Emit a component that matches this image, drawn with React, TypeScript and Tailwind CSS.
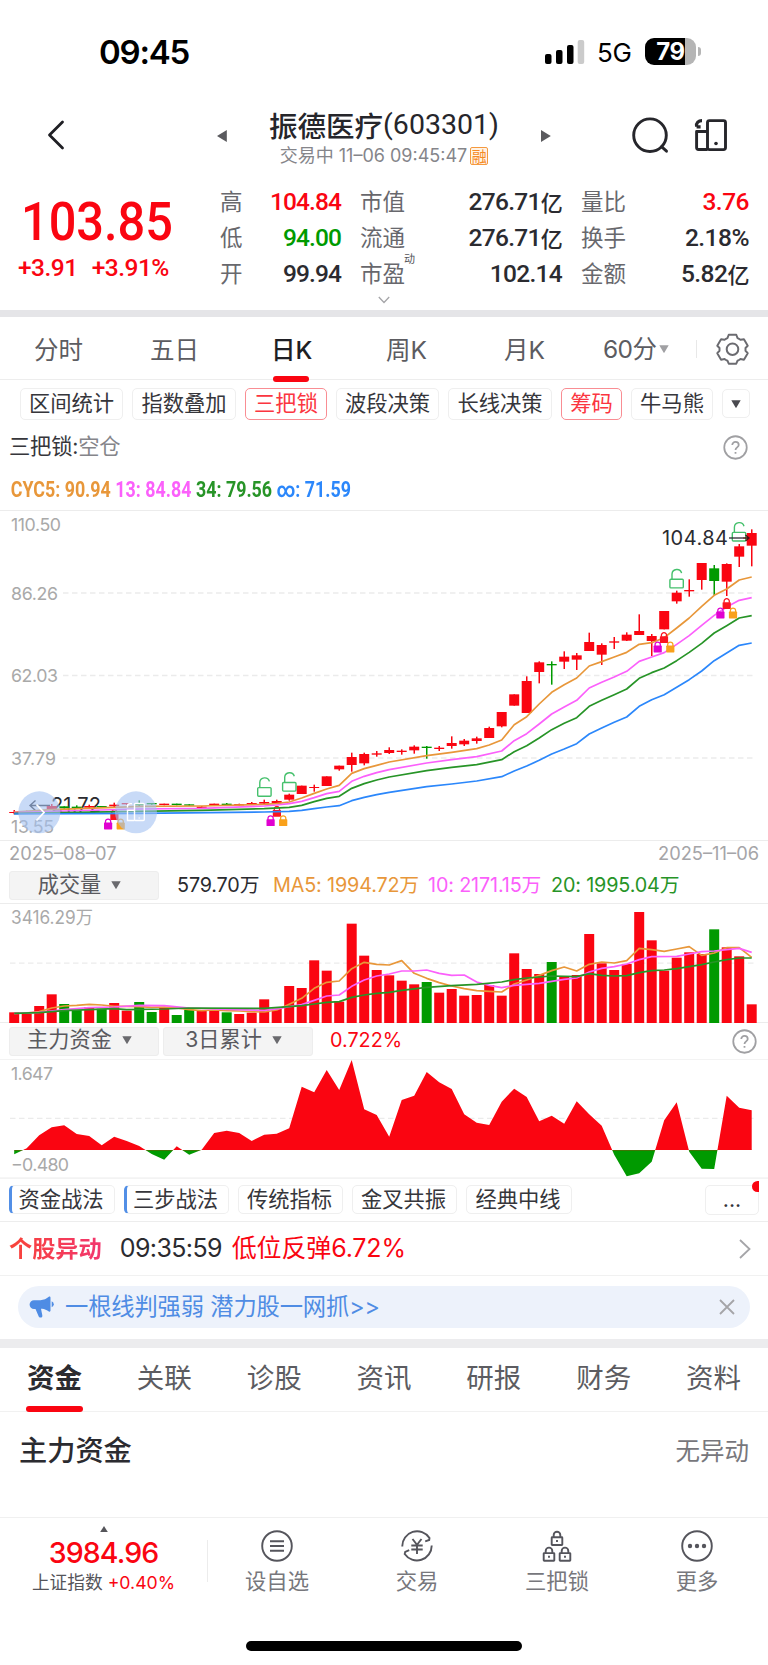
import React from "react";

const RED = "#fa0511";
const GREEN = "#009a00";
const cx = (i: number) => 14.2 + i * 12.5;

type Candle = [boolean, number, number, number, number];

/* [rising, body top, body bottom, wick top, wick bottom] in thirds of a pixel below y=500 */
const candles: Candle[] = [
  [true, 936, 939, 930, 943], [true, 934, 937, 932, 939], [true, 930, 935, 930, 936], [true, 918, 928, 912, 930],
  [false, 919, 925, 919, 926], [false, 920, 925, 916, 926], [true, 918, 923, 914, 924], [false, 918, 922, 918, 924],
  [true, 914, 919, 908, 922], [true, 909, 913, 909, 914], [false, 912, 916, 901, 918], [false, 909, 913, 909, 914],
  [true, 911, 915, 911, 916], [false, 911, 915, 911, 916], [false, 913, 917, 913, 918], [true, 920, 926, 918, 927],
  [true, 911, 915, 911, 916], [false, 911, 915, 909, 916], [true, 912, 916, 911, 917], [true, 909, 914, 906, 915],
  [true, 906, 911, 899, 915], [true, 903, 909, 899, 911], [true, 884, 899, 881, 902], [true, 857, 882, 857, 882],
  [true, 861, 864, 854, 875], [true, 829, 858, 829, 858], [true, 797, 808, 797, 812], [true, 771, 795, 758, 815],
  [true, 762, 790, 758, 796], [true, 760, 764, 753, 770], [true, 750, 759, 742, 762], [true, 752, 756, 748, 764],
  [true, 740, 751, 736, 761], [false, 740, 744, 738, 776], [true, 743, 747, 738, 753], [true, 729, 738, 709, 746],
  [true, 722, 733, 717, 738], [true, 715, 723, 710, 731], [true, 684, 714, 680, 714], [true, 636, 679, 636, 682],
  [true, 583, 617, 583, 617], [true, 543, 639, 529, 639], [true, 487, 516, 484, 550], [false, 492, 496, 484, 554],
  [true, 470, 485, 454, 507], [true, 466, 479, 459, 510], [true, 426, 453, 398, 453], [true, 435, 464, 430, 495],
  [true, 424, 428, 411, 447], [true, 404, 422, 397, 423], [true, 393, 405, 343, 405], [true, 408, 423, 402, 468],
  [true, 333, 388, 333, 388], [true, 278, 304, 272, 311], [true, 270, 274, 238, 290], [true, 189, 240, 189, 269],
  [false, 205, 243, 195, 285], [true, 192, 245, 190, 288], [true, 139, 170, 132, 201], [true, 99, 137, 88, 199],
];

type Pts = [number, number][];
const priceLines: { color: string; pts: Pts }[] = [
  { color: "#e8973a", pts: [[0, 936], [3, 929], [8, 922], [10, 919], [15, 918], [20, 913], [21, 911], [22, 906], [23, 894], [24, 880], [25, 867], [26, 856], [27, 820], [28, 806], [29, 796], [30, 786], [33, 767], [35, 757], [37, 746], [38, 735], [39, 720], [40, 674], [41, 650], [42, 612], [43, 577], [44, 554], [45, 534], [46, 498], [47, 485], [48, 471], [49, 457], [50, 433], [51, 428], [52, 413], [53, 384], [54, 354], [55, 319], [56, 286], [57, 267], [58, 240], [59, 231]] },
  { color: "#fb60fb", pts: [[0, 938], [4, 933], [10, 927], [15, 925], [20, 918], [21, 915], [22, 911], [23, 904], [24, 893], [25, 881], [26, 874], [27, 844], [28, 829], [29, 818], [30, 809], [33, 789], [35, 779], [37, 770], [39, 753], [40, 722], [41, 701], [42, 672], [43, 642], [44, 621], [45, 601], [46, 564], [47, 547], [48, 531], [49, 514], [50, 484], [51, 471], [52, 458], [53, 433], [54, 407], [55, 376], [56, 346], [57, 321], [58, 301], [59, 293]] },
  { color: "#279427", pts: [[0, 940], [10, 934], [15, 931], [20, 926], [22, 922], [23, 916], [24, 905], [25, 895], [26, 889], [27, 865], [28, 851], [29, 840], [30, 831], [33, 812], [35, 802], [37, 794], [39, 779], [40, 755], [41, 737], [42, 714], [43, 689], [44, 670], [45, 653], [46, 619], [47, 601], [48, 584], [49, 567], [50, 535], [51, 518], [52, 504], [53, 482], [54, 457], [55, 430], [56, 399], [57, 377], [58, 354], [59, 347]] },
  { color: "#2b87fb", pts: [[0, 942], [10, 940], [20, 936], [22, 934], [23, 931], [24, 926], [25, 921], [26, 917], [27, 902], [28, 892], [29, 884], [30, 877], [33, 860], [35, 852], [37, 843], [39, 830], [40, 813], [41, 798], [42, 781], [43, 762], [44, 747], [45, 731], [46, 702], [47, 684], [48, 667], [49, 651], [50, 619], [51, 599], [52, 584], [53, 562], [54, 539], [55, 513], [56, 482], [57, 459], [58, 436], [59, 429]] },
];

const volumes = [457, 461, 438, 403, 432, 450, 441, 446, 429, 452, 426, 456, 442, 465, 449, 452, 452, 457, 462, 458, 418, 446, 378, 384, 301, 332, 425, 191, 287, 330, 346, 362, 373, 366, 398, 387, 407, 405, 375, 407, 280, 327, 342, 306, 350, 345, 222, 310, 330, 312, 156, 241, 332, 293, 277, 282, 208, 262, 289, 433];
const volumeDown = [4, 5, 7, 10, 11, 13, 14, 17, 33, 43, 56];

const volumeLines: { color: string; pts: Pts }[] = [
  { color: "#e8973a", pts: [[0, 460], [1, 459], [2, 455], [3, 444], [4, 438], [5, 436], [6, 433], [7, 435], [8, 439], [9, 439], [10, 440], [11, 442], [12, 441], [13, 444], [14, 449], [15, 452], [16, 450], [17, 452], [18, 453], [19, 455], [20, 456], [21, 450], [22, 433], [23, 415], [24, 385], [25, 367], [26, 363], [27, 326], [28, 307], [29, 313], [30, 315], [31, 302], [32, 340], [33, 355], [34, 368], [35, 378], [36, 386], [37, 392], [38, 394], [39, 396], [40, 372], [41, 360], [42, 346], [43, 332], [44, 321], [45, 333], [46, 313], [47, 306], [48, 309], [49, 302], [50, 265], [51, 269], [52, 274], [53, 267], [54, 260], [55, 286], [56, 279], [57, 263], [58, 263], [59, 292]] },
  { color: "#fb60fb", pts: [[0, 460], [2, 457], [4, 449], [6, 443], [8, 441], [10, 436], [12, 437], [14, 444], [17, 448], [20, 451], [21, 447], [22, 440], [23, 434], [24, 421], [25, 408], [26, 405], [27, 379], [28, 360], [29, 348], [30, 342], [31, 333], [32, 333], [33, 330], [34, 340], [35, 346], [36, 345], [37, 366], [38, 376], [39, 383], [40, 376], [42, 370], [43, 364], [44, 358], [45, 354], [46, 336], [47, 325], [48, 320], [49, 312], [50, 299], [51, 290], [53, 289], [54, 282], [55, 275], [56, 273], [57, 269], [58, 265], [59, 277]] },
  { color: "#279427", pts: [[0, 460], [2, 458], [4, 452], [6, 449], [8, 446], [9, 449], [12, 447], [14, 444], [20, 445], [22, 440], [23, 437], [24, 432], [25, 427], [26, 425], [27, 412], [28, 405], [29, 400], [30, 397], [31, 391], [33, 382], [35, 377], [37, 373], [39, 366], [40, 359], [41, 354], [42, 351], [43, 348], [45, 350], [46, 341], [47, 346], [48, 348], [49, 347], [50, 338], [51, 332], [52, 330], [53, 326], [54, 320], [55, 314], [56, 306], [57, 299], [58, 294], [59, 294]] },
];

const fund = [883, 865, 826, 802, 796, 822, 828, 856, 830, 843, 858, 882, 899, 859, 884, 869, 819, 812, 819, 843, 824, 821, 805, 680, 697, 630, 690, 600, 748, 765, 830, 720, 707, 636, 667, 687, 763, 788, 795, 725, 686, 711, 784, 767, 791, 724, 763, 797, 884, 949, 940, 905, 781, 727, 875, 926, 927, 707, 743, 751];

const toPoints = (pts: Pts, base: number) => pts.map(([i, y]) => `${cx(i)},${base + y / 3}`).join(" ");

function Lines({ data, base }: { data: { color: string; pts: Pts }[]; base: number }) {
  return (
    <>
      {data.map((l) => (
        <polyline key={l.color} points={toPoints(l.pts, base)} fill="none" stroke={l.color} strokeWidth="1.7" strokeLinejoin="round" />
      ))}
    </>
  );
}

function OpenLock({ x, y }: { x: number; y: number }) {
  return (
    <g transform={`translate(${x} ${y})`} fill="none" stroke="#45c06c" strokeWidth="1.4">
      <rect x="-6.7" y="10.8" width="13.4" height="8.6" rx="1" />
      <path d="M-4.6 10.8V5.6a4.900 4.900 0 0 1 9.600-1" />
    </g>
  );
}

function MiniLock({ x, y, color }: { x: number; y: number; color: string }) {
  return (
    <g transform={`translate(${x} ${y})`}>
      <rect x="-4.1" y="3.9" width="8.2" height="6.8" rx="0.6" fill={color} />
      <path d="M-2.6 4.5V2.8a2.6 2.4 0 0 1 5.2 0v1.7" fill="none" stroke={color} strokeWidth="1.3" />
    </g>
  );
}

function LockTriplet({ x, y }: { x: number; y: number }) {
  return (
    <g>
      <MiniLock x={x} y={y} color="#fb1420" />
      <MiniLock x={x - 6.3} y={y + 9.4} color="#e000d0" />
      <MiniLock x={x + 6.3} y={y + 9.4} color="#f9a11b" />
    </g>
  );
}

function Dash({ y, x = 10 }: { y: number; x?: number }) {
  return <line x1={x} x2="756" y1={y} y2={y} stroke="#ebebeb" strokeWidth="1.3" strokeDasharray="5.5 3.5" />;
}

function PriceChart() {
  return (
    <svg className="block h-[330px] w-full" viewBox="0 510 768 330" fontFamily="Inter, 'Noto Sans CJK SC', sans-serif">
      <line x1="0" x2="768" y1="510.5" y2="510.5" stroke="#ececec" />
      <g fill="#a9a9a9" fontSize="17.8">
        <text x="11" y="531.3" textLength="50">110.50</text>
        <text x="11" y="599.8" textLength="47">86.26</text>
        <text x="11" y="682.3" textLength="47">62.03</text>
        <text x="11" y="765" textLength="45">37.79</text>
        <text x="11" y="833" textLength="43">13.55</text>
      </g>
      <Dash y={593} x={63} />
      <Dash y={675.5} x={63} />
      <Dash y={758} x={63} />
      <text x="51" y="812" fontSize="20" fill="#2b2b30" textLength="50">21.72</text>
      <path d="M50 805.500H30m5.500-5L30 805.500l5.500 5" fill="none" stroke="#2b2b30" strokeWidth="1.4" />
      {candles.map(([up, t, b, wt, wb], i) => (
        <g key={i} fill={up ? RED : GREEN}>
          <rect x={cx(i) - 5} width="10" y={500 + t / 3} height={(b - t) / 3} />
          <rect x={cx(i) - 0.7} width="1.5" y={500 + wt / 3} height={(wb - wt) / 3} />
        </g>
      ))}
      <OpenLock x={264.4} y={776.8} />
      <OpenLock x={289.3} y={771.7} />
      <OpenLock x={676.6} y={568.5} />
      <OpenLock x={739} y={521.6} />
      <text x="662" y="544.8" fontSize="20" fill="#2b2b30" textLength="66">104.84</text>
      <path d="M729 538h14" stroke="#2b2b30" strokeWidth="1.3" />
      <path d="M743 538h6m-3.500-3 3.500 3-3.500 3" fill="none" stroke="#4a1515" strokeWidth="1.3" />
      <LockTriplet x={114.4} y={809.3} />
      <LockTriplet x={276.9} y={806} />
      <Lines data={priceLines} base={500} />
      <LockTriplet x={664} y={632.3} />
      <LockTriplet x={726.7} y={598.3} />
      <circle cx="39.3" cy="812.3" r="21" fill="#a3c1f2" fillOpacity="0.6" />
      <circle cx="136" cy="812.3" r="21" fill="#a3c1f2" fillOpacity="0.6" />
      <path d="m36.500 804.500 7.500 8-7.500 8" fill="none" stroke="#fff" strokeWidth="1.8" />
      <g fill="none" stroke="#fff" strokeWidth="1.4">
        <rect x="134.500" y="803.500" width="9.800" height="17" rx="1" />
        <path d="M134.500 810.300h-7v10.200h7M127.500 807.500v-1.200a2.500 2.500 0 0 1 2.500-2.500h2" />
        <path d="M139.200 817.600v.8" />
      </g>
    </svg>
  );
}

function VolumeChart() {
  return (
    <svg className="block h-[120px] w-full" viewBox="0 903 768 120" fontFamily="Inter, 'Noto Sans CJK SC', sans-serif">
      <line x1="0" x2="768" y1="903.500" y2="903.500" stroke="#ececec" />
      <line x1="0" x2="768" y1="1022.500" y2="1022.500" stroke="#ececec" />
      <Dash y={963.2} />
      <text x="11" y="924.300" fontSize="18" fill="#a9a9a9" textLength="82" lengthAdjust="spacingAndGlyphs">3416.29万</text>
      {volumes.map((v, i) => (
        <rect key={i} x={cx(i) - 5} width="10" y={860 + v / 3} height={163 - v / 3} fill={volumeDown.includes(i) ? GREEN : RED} />
      ))}
      <Lines data={volumeLines} base={860} />
    </svg>
  );
}

function FundChart() {
  const poly = `${cx(0)},1150 ${fund.map((v, i) => `${cx(i)},${860 + v / 3}`).join(" ")} ${cx(59)},1150`;
  return (
    <svg className="block h-[120px] w-full" viewBox="0 1059 768 120" fontFamily="Inter, sans-serif">
      <clipPath id="above"><rect x="0" y="1050" width="768" height="100.300" /></clipPath>
      <clipPath id="below"><rect x="0" y="1149.800" width="768" height="40" /></clipPath>
      <line x1="0" x2="768" y1="1059" y2="1059" stroke="#f3f3f3" strokeWidth="2" />
      <line x1="0" x2="768" y1="1178.300" y2="1178.300" stroke="#f3f3f3" strokeWidth="2" />
      <Dash y={1118.3} />
      <polygon points={poly} fill={GREEN} clipPath="url(#below)" />
      <polygon points={poly} fill={RED} clipPath="url(#above)" />
      <g fill="#a9a9a9" fontSize="17.800">
        <text x="11" y="1079.500" textLength="42">1.647</text>
        <text x="11" y="1171" textLength="58">−0.480</text>
      </g>
    </svg>
  );
}

function HelpIcon({ className }: { className: string }) {
  return (
    <svg className={className} viewBox="0 0 24 24" fill="none" stroke="#a0a0a3" strokeWidth="1.700">
      <circle cx="12" cy="12" r="10.800" />
      <path d="M8.900 9.700c0-1.900 1.300-3 3.100-3s3.100 1.100 3.100 2.800c0 2.200-3.100 2.500-3.100 4.800" />
      <path d="M12 16.300v1.700" />
    </svg>
  );
}

function Down({ className }: { className: string }) {
  return (
    <svg className={className} viewBox="0 0 10 8" fill="currentColor">
      <path d="M.3.300h9.400L5.600 7.300a.7.700 0 0 1-1.200 0z" />
    </svg>
  );
}

function StatusBar() {
  return (
    <div className="flex h-[100px] items-start pt-[32px]">
      <div className="ml-[99px] w-[446px] text-[33px] font-semibold leading-[40px] tracking-[-1.200px] text-black">09:45</div>
      <svg className="mt-[8px] h-6 w-[40px]" viewBox="0 0 40 24" fill="#000">
        <rect x="0" y="14" width="6.500" height="10" rx="2" />
        <rect x="11" y="10" width="6.500" height="14" rx="2" />
        <rect x="22" y="5" width="6.500" height="19" rx="2" />
        <rect x="32.700" y="0" width="6.500" height="24" rx="2" fill="#cbcbcb" />
      </svg>
      <div className="ml-[12px] mt-[1px] w-[48px] text-[26px] leading-[40px] tracking-[-0.300px] text-black">5G</div>
      <div className="mt-[6px] flex items-center">
        <div className="flex h-[27px] w-[51px] items-center justify-center rounded-[9px] bg-[linear-gradient(90deg,#000_79%,#b5b5b5_79%)] text-[24px] font-bold leading-none tracking-[-0.500px] text-white">79</div>
        <div className="ml-[2px] h-[9px] w-[3px] rounded-r-full bg-[#b5b5b5]" />
      </div>
    </div>
  );
}

function Header() {
  return (
    <div className="flex h-[80px] items-start">
      <svg className="ml-[47px] mt-[20px] h-[30px] w-[18px]" viewBox="0 0 18 30" fill="none" stroke="#1f1f24" strokeWidth="2.800" strokeLinecap="round" strokeLinejoin="round">
        <path d="M15.500 2 2.500 15l13 13" />
      </svg>
      <svg className="ml-[152px] mt-[30px] h-3 w-[10px]" viewBox="0 0 10 12" fill="#5a5a5e"><path d="M9.800 0v12L0 6z" /></svg>
      <div className="ml-[12px] flex w-[290px] flex-col items-center whitespace-nowrap">
        <div className="mt-[5px] flex h-[40px] items-center font-['Noto_Sans_CJK_SC'] text-[28.500px] font-medium leading-[40px] text-[#26262b]">
          <span>振德医疗</span>
          <span className="font-['Roboto',sans-serif] font-normal">(603301)</span>
        </div>
        <div className="-mt-[1px] flex h-[24px] items-center text-[18px] leading-[24px] text-[#85858a]">
          <span>交易中 11–06 09:45:47</span>
          <span className="ml-[3px] flex h-[18px] w-[18px] items-center justify-center rounded-[2px] border border-[#f59a3f] bg-[#fff3e6] text-[15px] leading-none text-[#f58a25]">融</span>
        </div>
      </div>
      <svg className="ml-[12px] mt-[30px] h-3 w-[10px]" viewBox="0 0 10 12" fill="#5a5a5e"><path d="M0 0v12l9.800-6z" /></svg>
      <svg className="ml-[81px] mt-[16px] h-[38px] w-[38px]" viewBox="0 0 38 38" fill="none" stroke="#26262b" strokeWidth="2.900" strokeLinecap="round">
        <circle cx="18" cy="19.200" r="16.300" />
        <path d="m29.500 30.700 5 4.500" />
      </svg>
      <svg className="ml-[24px] mt-[18px] h-[34px] w-[34px]" viewBox="0 0 34 34" fill="none" stroke="#26262b" strokeWidth="2.900" strokeLinejoin="round">
        <rect x="13.500" y="2.600" width="18" height="29" rx="2" />
        <path d="M13.500 13.500H2.600v16a2 2 0 0 0 2 2h9" />
        <path d="M2.600 8.500C2 4.800 4.500 2.600 8 2.600M2.600 8.800h4" strokeWidth="3.200" />
        <circle cx="22" cy="25.500" r="1.800" fill="#26262b" stroke="none" />
      </svg>
    </div>
  );
}

const quoteRows = [
  { a: "高", av: "104.84", c: "text-[#fa0511]", b: "市值", bv: "276.71", bu: "亿", d: "量比", dv: "3.76", du: "", dc: "text-[#fa0511]" },
  { a: "低", av: "94.00", c: "text-[#009a00]", b: "流通", bv: "276.71", bu: "亿", d: "换手", dv: "2.18%", du: "", dc: "text-[#2b2b30]" },
  { a: "开", av: "99.94", c: "text-[#2b2b30]", b: "市盈", bv: "102.14", bu: "", d: "金额", dv: "5.82", du: "亿", dc: "text-[#2b2b30]" },
];

function Quote() {
  return (
    <div className="h-[130px]">
      <div className="flex h-[114px]">
        <div className="flex w-[220px] flex-col whitespace-nowrap font-['Roboto'] text-[#fa0511]">
          <div className="ml-[21px] mt-[17px] h-[50px] origin-left scale-x-[0.910] text-[53.500px] font-medium leading-[50px]">103.85</div>
          <div className="ml-[18px] mt-[9px] flex h-[24px] gap-[14px] text-[24.500px] font-medium leading-[24px] tracking-[-0.500px]">
            <span>+3.91</span>
            <span>+3.91%</span>
          </div>
        </div>
        <div className="flex-1 pr-[19px] pt-[4px]">
          {quoteRows.map((r) => (
            <div key={r.a} className="flex h-[35.800px] items-center text-[22.500px] leading-[35px] text-[#68686d]">
              <span className="w-[28px]">{r.a}</span>
              <span className={`w-[93px] text-right font-['Roboto'] text-[24.500px] font-medium tracking-[-0.900px] ${r.c}`}>{r.av}</span>
              <span className="relative ml-[19px] w-[60px]">
                {r.b}
                {r.b === "市盈" && <span className="absolute -top-[14px] left-[44px] text-[11px] text-[#55555a]">动</span>}
              </span>
              <span className="flex w-[142px] justify-end font-['Roboto'] text-[24.500px] font-medium tracking-[-0.700px] text-[#2b2b30]">
                {r.bv}
                {r.bu && <span className="font-['Noto_Sans_CJK_SC'] text-[22px] leading-[34px]">{r.bu}</span>}
              </span>
              <span className="ml-[19px] w-[60px]">{r.d}</span>
              <span className={`flex flex-1 justify-end font-['Roboto'] text-[24.500px] font-medium tracking-[-0.500px] ${r.dc}`}>
                {r.dv}
                {r.du && <span className="font-['Noto_Sans_CJK_SC'] text-[22px] leading-[34px]">{r.du}</span>}
              </span>
            </div>
          ))}
        </div>
      </div>
      <svg className="ml-[378px] mt-[2px] h-[8px] w-[12px]" viewBox="0 0 12 8" fill="none" stroke="#a5a5a8" strokeWidth="1.300"><path d="m.800 1 5.200 5.500L11.200 1" /></svg>
    </div>
  );
}

function PeriodTabs() {
  return (
    <div className="flex h-[63px] border-b-[1.500px] border-[#ededed] text-[24.500px] leading-[67px] text-[#5c5c61]">
      <span className="ml-[34px] w-[116px]">分时</span>
      <span className="w-[121px]">五日</span>
      <span className="relative w-[115px] font-medium text-[#1f1f24]">
        日K
        <i className="absolute left-[2px] top-[59px] h-[6px] w-[36px] rounded-[3px] bg-[#fa0511]" />
      </span>
      <span className="w-[118px]">周K</span>
      <span className="w-[99px]">月K</span>
      <span className="flex w-[93px] items-center pt-[2px]">
        <span className="tracking-[-0.600px]">60分</span>
        <Down className="ml-[3px] h-[8px] w-[10px] text-[#a0a0a3]" />
      </span>
      <i className="mt-[23px] h-[18px] w-px bg-[#e8e8e8]" />
      <svg className="ml-[19px] mt-[16px] h-[33px] w-[33px]" viewBox="0 0 33 33" fill="none" stroke="#6b6b70" strokeWidth="2" strokeLinejoin="round">
        <path d="M12.600 1.800h7.800l1.300 3.500a11.500 11.500 0 0 1 3 1.700l3.600-.6 3.900 6.700-2.300 2.400v2.800l2.300 2.500-3.900 6.700-3.600-.7a11.500 11.500 0 0 1-3 1.800l-1.300 3.100h-7.800l-1.300-3.100a11.500 11.500 0 0 1-3-1.800l-3.600.7L.8 20.800l2.300-2.500v-2.800L.8 13.100l3.900-6.700 3.600.6a11.500 11.500 0 0 1 3-1.700z" transform="translate(.5 0) scale(.97)" />
        <circle cx="16.500" cy="16.200" r="5.800" />
      </svg>
    </div>
  );
}

const chip = "flex items-center justify-center rounded-[5px] border-[1.500px] whitespace-nowrap";

function Tools() {
  return (
    <div className="flex h-[46px] items-start pl-[20px] pt-[8px] text-[21.300px] leading-none text-[#36363b]">
      <div className={`${chip} h-[32px] w-[103px] border-[#efefef]`}>区间统计</div>
      <div className={`${chip} ml-[9px] h-[32px] w-[104px] border-[#efefef]`}>指数叠加</div>
      <div className={`${chip} ml-[9px] h-[32px] w-[82px] border-[#f98d93] text-[#fb3540]`}>三把锁</div>
      <div className={`${chip} ml-[9px] h-[32px] w-[103px] border-[#efefef]`}>波段决策</div>
      <div className={`${chip} ml-[9px] h-[32px] w-[104px] border-[#efefef]`}>长线决策</div>
      <div className={`${chip} ml-[9px] h-[32px] w-[61px] border-[#f98d93] text-[#fb3540]`}>筹码</div>
      <div className={`${chip} ml-[9px] h-[32px] w-[82px] border-[#efefef]`}>牛马熊</div>
      <div className={`${chip} ml-[9px] mt-[1px] h-[29px] w-[28px] border-[#efefef]`}>
        <Down className="h-[8px] w-[10px] text-[#4a4a4f]" />
      </div>
    </div>
  );
}

function Select({ label, className }: { label: string; className: string }) {
  return (
    <div className={`flex h-[29px] items-center justify-center rounded-[3px] border border-[#ededed] bg-[#f4f4f4] pb-[2px] pr-[9px] text-[21.200px] leading-none tracking-normal text-[#5a5a5f] ${className}`}>
      <span>{label}</span>
      <Down className="ml-[10px] h-[8px] w-[10px] text-[#6a6a6e]" />
    </div>
  );
}

function Strategies() {
  return (
    <div className="flex h-[43px] items-start border-b-[1.500px] border-[#ededed] pl-[9px] pt-[6px] text-[21.300px] leading-none text-[#36363b]">
      <div className={`${chip} h-[29px] w-[106px] border-[#efefef] border-l-[3px] border-l-[#528fe6] pr-[4px]`}>资金战法</div>
      <div className={`${chip} ml-[9px] h-[29px] w-[105px] border-[#efefef] border-l-[3px] border-l-[#528fe6] pr-[4px]`}>三步战法</div>
      <div className={`${chip} ml-[9px] h-[29px] w-[105px] border-[#efefef] pr-[2px]`}>传统指标</div>
      <div className={`${chip} ml-[9px] h-[29px] w-[105px] border-[#efefef] pr-[2px]`}>金叉共振</div>
      <div className={`${chip} ml-[9px] h-[29px] w-[106px] border-[#efefef] pr-[2px]`}>经典中线</div>
      <div className="relative ml-[133px] h-[30px] w-[54px] overflow-visible">
        <div className={`${chip} h-[30px] w-[54px] border-[#efefef]`}><span className="-mt-[1px]">...</span></div>
        <i className="absolute -top-[4px] right-0 h-[11px] w-[7px] rounded-l-full bg-[#fa0511]" />
      </div>
    </div>
  );
}

const iconProps = { viewBox: "0 0 32 32", fill: "none", stroke: "#55555c", strokeWidth: 1.9, className: "h-8 w-8" };

function Padlock({ x, y }: { x: number; y: number }) {
  return (
    <g transform={`translate(${x} ${y})`}>
      <rect x="-5.300" y="5.800" width="10.600" height="7.700" rx=".5" />
      <path d="M-3.300 5.800V3.600a3.300 3.300 0 0 1 6.600 0v2.200M0 8.500v2" />
    </g>
  );
}

function BottomNav() {
  return (
    <div className="flex h-[124px] border-t-[1.500px] border-[#f0f0f0]">
      <div className="flex w-[207px] flex-col items-center whitespace-nowrap">
        <svg className="mt-[8px] h-[6px] w-[8px]" viewBox="0 0 8 6" fill="#55555a"><path d="M4 0l3.800 6H.2z" /></svg>
        <div className="mt-[5px] h-[30px] text-[28.500px] font-medium leading-[31px] tracking-[-0.900px] text-[#fa0511]">3984.96</div>
        <div className="mt-[4px] h-[24px] text-[17.700px] leading-[24px] text-[#55555a]">
          上证指数 <span className="text-[#fa0511]">+0.40%</span>
        </div>
      </div>
      <i className="mt-[22px] h-[42px] w-px bg-[#ececec]" />
      <div className="-ml-[1px] grid w-[560px] grid-cols-4 pt-[12px] text-[21.300px] leading-[30px] text-[#77777c]">
        <div className="flex flex-col items-center gap-[4px]">
          <svg {...iconProps}><circle cx="16" cy="16" r="14.800" /><path d="M9 11.200h14M9 16h14M9 20.800h14" strokeWidth="2" /></svg>
          设自选
        </div>
        <div className="flex flex-col items-center gap-[4px]">
          <svg {...iconProps}>
            <path d="M1.300 16.500A14.800 14.800 0 0 1 28.500 8l-.300 2-4 1.300M30.700 15.500A14.800 14.800 0 0 1 3.700 24l.500-2 4-1.800" />
            <path d="m11.500 9 4.500 5.800L20.500 9M16 14.800V24M10.300 15.500h11.400M10.300 19.500h11.400" />
          </svg>
          交易
        </div>
        <div className="flex flex-col items-center gap-[4px]">
          <svg {...iconProps}><Padlock x={16} y={1.500} /><Padlock x={8} y={17.300} /><Padlock x={24} y={17.300} /></svg>
          三把锁
        </div>
        <div className="flex flex-col items-center gap-[4px]">
          <svg {...iconProps}>
            <circle cx="16" cy="16" r="14.800" />
            <g fill="#55555c" stroke="none"><circle cx="9" cy="16" r="2.200" /><circle cx="16" cy="16" r="2.200" /><circle cx="23" cy="16" r="2.200" /></g>
          </svg>
          更多
        </div>
      </div>
    </div>
  );
}

const infoTabs = ["资金", "关联", "诊股", "资讯", "研报", "财务", "资料"];

export default function App() {
  return (
    <div className="h-[1665px] w-[768px] overflow-hidden bg-white font-['Inter','Noto_Sans_CJK_SC',sans-serif]">
      <StatusBar />
      <Header />
      <Quote />
      <div className="h-[7px] bg-[#e5e5e8]" />
      <PeriodTabs />
      <Tools />
      <div className="flex h-[42px] items-center justify-between pl-[9px] pr-[20px] text-[21.300px] leading-none">
        <span className="tracking-[-0.200px] text-[#36363b]">三把锁:<span className="text-[#85858a]">空仓</span></span>
        <HelpIcon className="h-[25px] w-[25px]" />
      </div>
      <div className="flex h-[42px] origin-left scale-x-[0.830] items-center gap-[5.500px] whitespace-nowrap pl-[13px] pt-[2px] font-['Roboto'] text-[21.500px] font-bold leading-none">
        <span className="text-[#e8973a]">CYC5: 90.94</span>
        <span className="text-[#fb60fb]">13: 84.84</span>
        <span className="text-[#279427]">34: 79.56</span>
        <span className="text-[#2b87fb]">∞: 71.59</span>
      </div>
      <PriceChart />
      <div className="flex h-[30px] items-center justify-between border-t border-[#ececec] px-[9px] pb-[4px] text-[18.300px] leading-none text-[#a5a5a8]">
        <span>2025–08–07</span>
        <span>2025–11–06</span>
      </div>
      <div className="flex h-[33px] items-center whitespace-nowrap pb-[2px] pl-[9px] text-[19.800px] leading-none tracking-[-0.150px]">
        <Select label="成交量" className="w-[150px]" />
        <span className="ml-[18px] w-[96px] text-[#2b2b30]">579.70万</span>
        <span className="w-[155px] text-[#e8973a]">MA5: 1994.72万</span>
        <span className="w-[123px] text-[#fb60fb]">10: 2171.15万</span>
        <span className="text-[#279427]">20: 1995.04万</span>
      </div>
      <VolumeChart />
      <div className="flex h-[36px] items-center pl-[9px] pr-[11px] text-[19.800px] leading-none">
        <Select label="主力资金" className="w-[150px]" />
        <Select label="3日累计" className="ml-[4px] w-[150px]" />
        <span className="ml-[17px] flex-1 text-[#fa0511]">0.722%</span>
        <HelpIcon className="h-[25px] w-[25px]" />
      </div>
      <FundChart />
      <Strategies />
      <div className="flex h-[54px] items-center border-b-[1.500px] border-[#f1f1f1] pl-[9px] pr-[17px] text-[25px] leading-none">
        <span className="bg-[linear-gradient(90deg,#f84438,#f2366f)] bg-clip-text text-[23.200px] font-bold leading-[30px] text-transparent">个股异动</span>
        <span className="ml-[18px] w-[112px] text-[#2b2b30] tracking-[-0.600px]">09:35:59</span>
        <span className="flex-1 tracking-[-0.150px] text-[#fa0511]">低位反弹6.72%</span>
        <svg className="h-[20px] w-[12px]" viewBox="0 0 12 20" fill="none" stroke="#a5a5a8" strokeWidth="1.800"><path d="m1 1 9.500 9L1 19" /></svg>
      </div>
      <div className="mx-[18px] mt-[10px] flex h-[42px] items-center rounded-full bg-[#edf2fb] pl-[11px] pr-[15px] text-[23.300px] leading-none tracking-[-0.150px] text-[#4f8ce4]">
        <svg className="h-[22px] w-[26px]" viewBox="0 0 26 22" fill="currentColor">
          <path d="M5 4.200h6.500c3 0 6.200-1.600 8.300-3.400.8-.6 1.700-.2 1.700.8v13c0 1-.9 1.400-1.700.8-1.800-1.400-4.300-2.500-6.800-2.700l-1 .1 1.300 6.400c.3 1.500-.4 2.300-1.700 2.300-1 0-1.700-.5-2.100-1.500L6.500 13H5a4.400 4.400 0 0 1 0-8.800z" />
          <path d="M22.700 5.200a3.200 3.200 0 0 1 0 6z" />
        </svg>
        <span className="ml-[10px] flex-1">一根线判强弱 潜力股一网抓&gt;&gt;</span>
        <svg className="h-[16px] w-[16px]" viewBox="0 0 16 16" stroke="#a5a5a8" strokeWidth="1.800"><path d="m1 1 14 14M15 1 1 15" /></svg>
      </div>
      <div className="mt-[11px] h-[9px] bg-[#ececee]" />
      <div className="flex h-[64px] justify-between border-b-[1.500px] border-[#f1f1f1] px-[27px] text-[27.500px] leading-[60px] text-[#5c5c61]">
        {infoTabs.map((t, i) => (
          <span key={t} className={i === 0 ? "relative font-bold text-[#2b2b30]" : ""}>
            {t}
            {i === 0 && <i className="absolute -left-px top-[58px] h-[6px] w-[57px] rounded-[3px] bg-[#fa0511]" />}
          </span>
        ))}
      </div>
      <div className="flex h-[105px] items-start justify-between pl-[19px] pr-[19px] leading-[78px]">
        <span className="text-[28.200px] font-medium text-[#2b2b30]">主力资金</span>
        <span className="text-[24.500px] text-[#77777c]">无异动</span>
      </div>
      <BottomNav />
      <div className="ml-[246px] h-[10px] w-[276px] rounded-full bg-black" />
    </div>
  );
}
